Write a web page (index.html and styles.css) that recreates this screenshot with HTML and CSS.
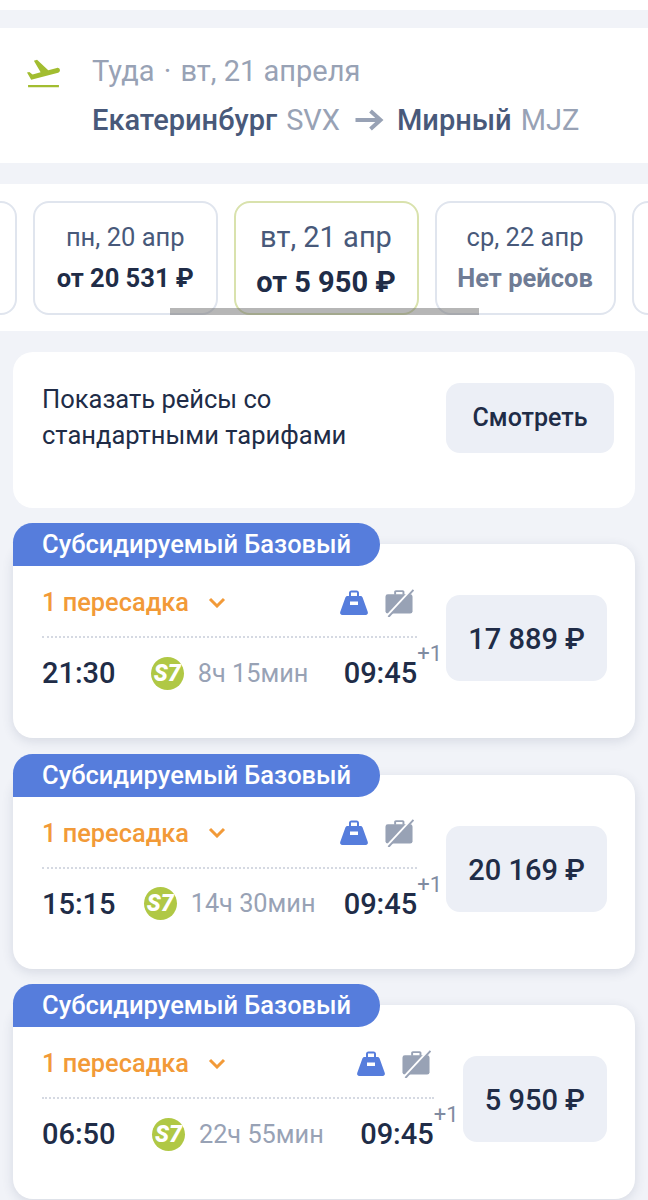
FILE: index.html
```html
<!DOCTYPE html>
<html lang="ru">
<head>
    <meta charset="UTF-8">
    <meta name="viewport" content="width=device-width, initial-scale=1.0">
    <title>Рейсы</title>
    <link rel="stylesheet" href="styles.css">
</head>
<body>

    <div class="topStrip"></div>

    <header class="route">
        <svg class="routeIcon" viewBox="0 0 24 24"><path d="M2.500 19h19v1.400h-19v-1.400zm19.570-9.360c-.21-.8-1.040-1.280-1.840-1.060L14.920 10l-6.900-6.430-1.930.51 4.140 7.170-4.970 1.330-1.970-1.540-1.450.39 2.590 4.490L21 11.490c.81-.23 1.280-1.050 1.070-1.850z"/></svg>
        <div class="routeText">
            <div class="routeDate">Туда <span class="routeDot">·</span> вт, 21 апреля</div>
            <div class="routeCities">
                <b>Екатеринбург</b> <span class="code">SVX</span>
                <svg class="routeArrow" viewBox="0 0 30 24"><path d="M2 12h25M17 3l10 9-10 9"/></svg>
                <b>Мирный</b> <span class="code">MJZ</span>
            </div>
        </div>
    </header>

    <div class="dates">
        <div class="dateCard"></div>
        <div class="dateCard first">
            <div class="dateDay">пн, 20 апр</div>
            <div class="datePrice">от 20 531 ₽</div>
        </div>
        <div class="dateCard active">
            <div class="dateDay">вт, 21 апр</div>
            <div class="datePrice">от 5 950 ₽</div>
        </div>
        <div class="dateCard narrow">
            <div class="dateDay">ср, 22 апр</div>
            <div class="datePrice none">Нет рейсов</div>
        </div>
        <div class="dateCard"></div>
        <div class="scrollThumb"></div>
    </div>

    <main class="list">
        <section class="notice">
            <p>Показать рейсы со стандартными тарифами</p>
            <button class="noticeButton">Смотреть</button>
        </section>

        <article class="ticket">
            <div class="badge">Субсидируемый Базовый</div>
            <div class="ticketMain">
                <div class="ticketTop">
                    <div class="stops">1 пересадка
                        <svg class="chevron" viewBox="0 0 18 11"><path d="M2 2l7 7 7-7"/></svg>
                    </div>
                    <div class="bags">
                        <svg class="bag" viewBox="0 0 30 26"><path class="blue" d="M10 7V3.500C10 2 11 1 12.500 1h5C19 1 20 2 20 3.500V7h-2V3h-6v4z"/><path class="blue" d="M8.500 6.500h13c1 0 1.800.6 2.100 1.500l5.200 14.500c.5 1.600-.5 3-2.200 3H3.400c-1.700 0-2.700-1.400-2.200-3L6.400 8c.3-.9 1.100-1.500 2.100-1.500z"/><rect class="slot" x="11" y="12" width="8" height="3.500"/></svg>
                        <svg class="bag" viewBox="0 0 30 30"><path class="grey" d="M10 7V4c0-1 .8-1.800 1.800-1.800h7c1 0 1.800.8 1.800 1.800v3h-2V4.200h-6.600V7z"/><rect class="grey" x="1" y="6.500" width="28" height="20" rx="2.500"/><path class="cut" d="M2 30L28 2"/><path class="slash" d="M4 30L30 2"/></svg>
                    </div>
                </div>
                <div class="dots"></div>
                <div class="times">
                    <span class="time">21:30</span>
                    <span class="trip"><span class="logo">S7</span><span class="duration">8ч 15мин</span></span>
                    <span class="time arrival">09:45<sup class="plus">+1</sup></span>
                </div>
            </div>
            <div class="price">17 889 ₽</div>
        </article>

        <article class="ticket">
            <div class="badge">Субсидируемый Базовый</div>
            <div class="ticketMain">
                <div class="ticketTop">
                    <div class="stops">1 пересадка
                        <svg class="chevron" viewBox="0 0 18 11"><path d="M2 2l7 7 7-7"/></svg>
                    </div>
                    <div class="bags">
                        <svg class="bag" viewBox="0 0 30 26"><path class="blue" d="M10 7V3.500C10 2 11 1 12.500 1h5C19 1 20 2 20 3.500V7h-2V3h-6v4z"/><path class="blue" d="M8.500 6.500h13c1 0 1.800.6 2.100 1.500l5.200 14.500c.5 1.600-.5 3-2.200 3H3.400c-1.700 0-2.700-1.400-2.200-3L6.400 8c.3-.9 1.100-1.500 2.100-1.500z"/><rect class="slot" x="11" y="12" width="8" height="3.500"/></svg>
                        <svg class="bag" viewBox="0 0 30 30"><path class="grey" d="M10 7V4c0-1 .8-1.800 1.800-1.800h7c1 0 1.800.8 1.800 1.800v3h-2V4.200h-6.600V7z"/><rect class="grey" x="1" y="6.500" width="28" height="20" rx="2.500"/><path class="cut" d="M2 30L28 2"/><path class="slash" d="M4 30L30 2"/></svg>
                    </div>
                </div>
                <div class="dots"></div>
                <div class="times">
                    <span class="time">15:15</span>
                    <span class="trip"><span class="logo">S7</span><span class="duration">14ч 30мин</span></span>
                    <span class="time arrival">09:45<sup class="plus">+1</sup></span>
                </div>
            </div>
            <div class="price">20 169 ₽</div>
        </article>

        <article class="ticket">
            <div class="badge">Субсидируемый Базовый</div>
            <div class="ticketMain">
                <div class="ticketTop">
                    <div class="stops">1 пересадка
                        <svg class="chevron" viewBox="0 0 18 11"><path d="M2 2l7 7 7-7"/></svg>
                    </div>
                    <div class="bags">
                        <svg class="bag" viewBox="0 0 30 26"><path class="blue" d="M10 7V3.500C10 2 11 1 12.500 1h5C19 1 20 2 20 3.500V7h-2V3h-6v4z"/><path class="blue" d="M8.500 6.500h13c1 0 1.800.6 2.100 1.500l5.200 14.500c.5 1.600-.5 3-2.200 3H3.400c-1.700 0-2.700-1.400-2.200-3L6.400 8c.3-.9 1.100-1.500 2.100-1.500z"/><rect class="slot" x="11" y="12" width="8" height="3.500"/></svg>
                        <svg class="bag" viewBox="0 0 30 30"><path class="grey" d="M10 7V4c0-1 .8-1.800 1.800-1.800h7c1 0 1.800.8 1.800 1.800v3h-2V4.200h-6.600V7z"/><rect class="grey" x="1" y="6.500" width="28" height="20" rx="2.500"/><path class="cut" d="M2 30L28 2"/><path class="slash" d="M4 30L30 2"/></svg>
                    </div>
                </div>
                <div class="dots"></div>
                <div class="times">
                    <span class="time">06:50</span>
                    <span class="trip"><span class="logo">S7</span><span class="duration">22ч 55мин</span></span>
                    <span class="time arrival">09:45<sup class="plus">+1</sup></span>
                </div>
            </div>
            <div class="price">5 950 ₽</div>
        </article>
    </main>

</body>
</html>
```

FILE: styles.css
```css
html, body {
    height: 1200px;
    overflow: hidden;
}

body {
    font-family: Roboto, 'Noto Sans', sans-serif;
    margin: 0;
    background-color: #f1f3f8;
    color: #202c47;
}

.topStrip {
    height: 10px;
    margin-bottom: 18px;
    background-color: #fff;
}

.route {
    display: flex;
    height: 135px;
    box-sizing: border-box;
    padding: 22px 0 0 24px;
    background-color: #fff;
}

.routeIcon {
    flex: none;
    width: 39px;
    height: 39px;
    margin: 4px 29px 0 0;
    fill: #a2bd30;
}

.routeDate {
    font-size: 29px;
    line-height: 42px;
    color: #98a2b5;
}

.routeDot {
    margin: 0 2px;
}

.routeCities {
    display: flex;
    align-items: center;
    gap: 9px;
    margin-top: 7px;
    font-size: 29px;
    line-height: 42px;
    color: #48597a;
}

.routeCities b {
    font-weight: 500;
}

.code {
    color: #98a2b5;
}

.routeArrow {
    width: 31px;
    height: 24px;
    margin: 0 4px 0 4px;
    fill: none;
    stroke: #98a2b5;
    stroke-width: 4;
}

.dates {
    position: relative;
    display: flex;
    gap: 16px;
    height: 147px;
    box-sizing: border-box;
    margin-top: 21px;
    padding: 17px 0 0;
    overflow: hidden;
    background-color: #fff;
}

.dateCard {
    flex: none;
    width: 185px;
    height: 114px;
    box-sizing: border-box;
    padding-top: 16px;
    border: 2px solid #e0e5ee;
    border-radius: 16px;
    text-align: center;
}

.dateCard:first-child {
    margin-left: -168px;
}

.dateCard.first {
    width: 184.500px;
}

.dateCard.narrow {
    width: 181px;
}

.dateCard.active {
    border-color: #d9e2ad;
}

.dateDay {
    font-size: 25.500px;
    line-height: 36px;
    color: #48597a;
}

.datePrice {
    margin-top: 5px;
    font-size: 25.500px;
    font-weight: 700;
    line-height: 36px;
}

.datePrice.none {
    color: #6f7c95;
}

.active .dateDay {
    font-size: 29px;
}

.active .datePrice {
    margin-top: 9px;
    font-size: 29px;
}

.scrollThumb {
    position: absolute;
    left: 170px;
    top: 124px;
    width: 309px;
    height: 7px;
    background-color: rgba(110, 110, 110, 0.5);
}

.list {
    padding: 21px 13px 0;
}

.notice {
    display: flex;
    justify-content: space-between;
    height: 156px;
    box-sizing: border-box;
    margin-bottom: 36px;
    padding: 29px 21px 0 29px;
    border-radius: 20px;
    background-color: #fff;
}

.notice p {
    width: 340px;
    margin: 0;
    font-size: 25.500px;
    line-height: 36px;
}

.noticeButton {
    width: 168px;
    height: 70px;
    margin-top: 2px;
    padding: 0 0 2px;
    border: none;
    border-radius: 14px;
    background-color: #eceff6;
    color: #202c47;
    font-family: inherit;
    font-size: 25px;
    font-weight: 500;
}

.ticket {
    position: relative;
    display: flex;
    align-items: flex-start;
    gap: 29px;
    height: 194px;
    box-sizing: border-box;
    margin-bottom: 36.500px;
    padding: 40px 28px 0 29px;
    border-radius: 20px;
    background-color: #fff;
    box-shadow: 0 3px 12px rgba(50, 65, 100, 0.14);
}

.badge {
    position: absolute;
    left: 0;
    top: -21px;
    width: 367px;
    height: 43px;
    box-sizing: border-box;
    padding-left: 29px;
    border-radius: 20px 22px 22px 0;
    background-color: #567ddc;
    color: #fff;
    font-size: 25.500px;
    font-weight: 500;
    line-height: 42px;
}

.ticketMain {
    flex: 1;
    min-width: 0;
}

.ticketTop {
    display: flex;
    justify-content: space-between;
    align-items: center;
    height: 36px;
}

.stops {
    display: flex;
    align-items: center;
    gap: 19px;
    font-size: 25.400px;
    font-weight: 500;
    color: #f29a38;
}

.chevron {
    width: 18px;
    height: 11px;
    fill: none;
    stroke: #f29a38;
    stroke-width: 3;
}

.bags {
    display: flex;
    align-items: center;
    gap: 15px;
    margin-right: 3px;
}

.bag {
    width: 30px;
    height: 29px;
}

.blue {
    fill: #567ddc;
}

.grey {
    fill: #98a2b5;
}

.slot {
    fill: #fff;
}

.cut {
    stroke: #fff;
    stroke-width: 3;
}

.slash {
    stroke: #98a2b5;
    stroke-width: 2;
}

.dots {
    margin-top: 16px;
    border-top: 2px dotted #d5d9e2;
}

.times {
    display: flex;
    justify-content: space-between;
    align-items: center;
    margin-top: 17px;
    height: 36px;
}

.time {
    font-size: 29px;
    font-weight: 500;
}

.arrival {
    position: relative;
}

.plus {
    position: absolute;
    left: 100%;
    top: -14px;
    font-size: 22px;
    font-weight: 400;
    line-height: 24px;
    color: #7f8ba1;
}

.trip {
    display: flex;
    align-items: center;
    gap: 14px;
}

.logo {
    width: 33px;
    height: 33px;
    border-radius: 50%;
    background-color: #b0c845;
    color: #fff;
    font-size: 23px;
    font-style: italic;
    font-weight: 900;
    line-height: 33px;
    text-align: center;
}

.duration {
    font-size: 25.300px;
    color: #98a2b5;
}

.price {
    flex: none;
    height: 86px;
    margin-top: 11px;
    padding: 0 22px;
    border-radius: 14px;
    background-color: #eceff6;
    font-size: 29px;
    font-weight: 500;
    line-height: 89px;
}
```
